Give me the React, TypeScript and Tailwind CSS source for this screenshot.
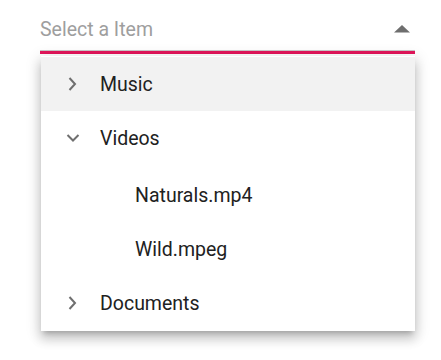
import React from 'react';

const font = { fontFamily: 'Roboto, "Noto Sans", sans-serif' };

const Chevron: React.FC<{ open?: boolean }> = ({ open }) => (
  <svg width="16" height="16" viewBox="0 0 16 16" className="text-[#6f6f6f]">
    {open ? (
      <path d="M2.5 5 L8 10.5 L13.5 5" fill="none" stroke="currentColor" strokeWidth="2" />
    ) : (
      <path d="M4.5 2 L10 8 L4.5 14" fill="none" stroke="currentColor" strokeWidth="2" />
    )}
  </svg>
);

type Node = { label: string; open?: boolean; children?: string[]; active?: boolean };

const nodes: Node[] = [
  { label: 'Music', active: true },
  { label: 'Videos', open: true, children: ['Naturals.mp4', 'Wild.mpeg'] },
  { label: 'Documents' },
];

export default function App() {
  return (
    <div className="w-[441px] h-[360px] bg-white pt-[17px]" style={font}>
      <div className="ml-[40px] w-[375px]">
        <div className="h-[34px] flex items-start justify-between border-b border-[#c8c8c8]">
          <span className="mt-[1px] text-[19.5px] leading-[24px] text-[#9e9e9e]">Select a Item</span>
          <svg width="16" height="8" viewBox="0 0 16 8" className="mt-[8px] mr-[5px]">
            <path d="M0 7.5 L8 0 L16 7.5 Z" fill="#6e6e6e" />
          </svg>
        </div>
        <div className="h-[3px] bg-[#e3165b]" />
      </div>
      <div className="ml-[41px] mt-[2px] w-[374px] bg-white py-[1px] shadow-[0_5px_5px_-3px_rgba(0,0,0,0.2),0_8px_10px_1px_rgba(0,0,0,0.14),0_3px_14px_2px_rgba(0,0,0,0.12)]">
        {nodes.map((n) => (
          <div key={n.label}>
            <div
              className={
                n.active
                  ? 'h-[54px] flex items-center bg-[#f2f2f2]'
                  : 'h-[54px] flex items-center'
              }
            >
              <div className="w-[59px] flex justify-end pr-[19px]">
                <Chevron open={n.open} />
              </div>
              <span className="mt-[2px] text-[19.5px] text-[#212121]">{n.label}</span>
            </div>
            {n.children && (
              <div className="pt-[3px]">
                {n.children.map((c) => (
                  <div key={c} className="h-[54px] flex items-center pl-[94px]">
                    <span className="mt-[2px] text-[19.5px] text-[#212121]">{c}</span>
                  </div>
                ))}
              </div>
            )}
          </div>
        ))}
      </div>
    </div>
  );
}
